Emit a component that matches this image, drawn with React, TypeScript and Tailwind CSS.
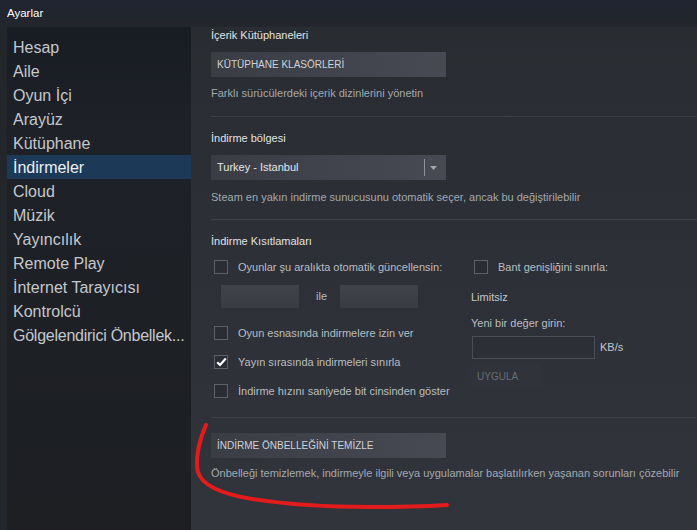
import React from 'react';

const sidebarItems = [
  'Hesap',
  'Aile',
  'Oyun İçi',
  'Arayüz',
  'Kütüphane',
  'İndirmeler',
  'Cloud',
  'Müzik',
  'Yayıncılık',
  'Remote Play',
  'İnternet Tarayıcısı',
  'Kontrolcü',
  'Gölgelendirici Önbellek...',
];

function Checkbox({ checked = false }: { checked?: boolean }) {
  return (
    <div className="w-[14px] h-[14px] shrink-0 border border-[#5d6067] bg-[#2a2d33] flex items-center justify-center">
      {checked && (
        <svg width="11" height="10" viewBox="0 0 11 10">
          <path d="M1.2 5.2 L4 8 L9.8 1.6" fill="none" stroke="#ffffff" strokeWidth="2.2" />
        </svg>
      )}
    </div>
  );
}

function CheckRow({ label, checked, className }: { label: string; checked?: boolean; className: string }) {
  return (
    <div className={`flex items-center h-[16px] ml-[3px] ${className}`}>
      <Checkbox checked={checked} />
      <span className="ml-[10px] text-[11px] text-[#b9bdc2] whitespace-nowrap">{label}</span>
    </div>
  );
}

export default function App() {
  return (
    <div className="relative w-[697px] h-[530px] overflow-hidden bg-[#23262b] font-['Liberation_Sans',Arial,sans-serif]">
      <div className="h-[27px] pl-[7px] flex items-center bg-gradient-to-b from-[#1e2531] to-[#23262b] text-[11.5px] text-white">
        Ayarlar
      </div>

      <div className="flex h-[503px]">
        <div className="w-[191px] shrink-0 pl-[7px] bg-[#23262b]">
          <div className="h-full pt-[8px] bg-gradient-to-b from-[#181c23] via-[#1e2127] via-20% to-[#1d1f23]">
            {sidebarItems.map((item) => (
              <div
                key={item}
                className={[
                  'h-[24px] pt-[2px] leading-[22px] pl-[6px] text-[16px] whitespace-nowrap overflow-hidden',
                  item.startsWith('Gölge') ? 'tracking-[-0.25px]' : '',
                  item === 'İndirmeler' ? 'bg-[#1c3a58] text-[#eef1f4]' : 'text-[#c4c8cd]',
                ].join(' ')}
              >
                {item}
              </div>
            ))}
          </div>
        </div>

        <div className="flex-1 pl-[20px] bg-gradient-to-b from-[#292c31] to-[#31343b]">
          <div className="mt-[1px] leading-[14px] text-[11px] text-[#e0e3e6]">İçerik Kütüphaneleri</div>
          <div className="mt-[10px] w-[235px] h-[25px] pl-[6px] flex items-center bg-gradient-to-r from-[#3a3d44] to-[#474a53] text-[10px] text-[#cdd2d8]">
            KÜTÜPHANE KLASÖRLERİ
          </div>
          <div className="mt-[9px] leading-[14px] text-[11px] text-[#a3a9b0]">Farklı sürücülerdeki içerik dizinlerini yönetin</div>
          <div className="mt-[16px] h-px bg-[#3d4046]" />

          <div className="mt-[14px] leading-[14px] text-[11px] text-[#e0e3e6]">İndirme bölgesi</div>
          <div className="mt-[10px] w-[235px] h-[25px] pl-[6px] flex items-center bg-gradient-to-r from-[#3a3d44] to-[#474a53] text-[11px] text-[#e4e7ea]">
            <span className="flex-1">Turkey - Istanbul</span>
            <div className="w-px h-[17px] bg-[#8e9298]" />
            <svg className="ml-[5px] mr-[9px]" width="7" height="4" viewBox="0 0 7 4">
              <path d="M0 0 H7 L3.5 4 Z" fill="#a3a7ad" />
            </svg>
          </div>
          <div className="mt-[10px] leading-[14px] text-[11px] text-[#a3a9b0]">
            Steam en yakın indirme sunucusunu otomatik seçer, ancak bu değiştirilebilir
          </div>
          <div className="mt-[15px] h-px bg-[#3d4046]" />

          <div className="mt-[14px] leading-[14px] text-[11px] text-[#e0e3e6]">İndirme Kısıtlamaları</div>
          <div className="flex">
            <div className="w-[260px]">
              <CheckRow className="mt-[11px]" label="Oyunlar şu aralıkta otomatik güncellensin:" />
              <div className="mt-[10px] ml-[10px] flex items-center">
                <div className="w-[78px] h-[23px] bg-gradient-to-b from-[#40434a] to-[#393c43]" />
                <span className="ml-[17px] mr-[13px] text-[11px] text-[#b9bdc2]">ile</span>
                <div className="w-[78px] h-[23px] bg-gradient-to-b from-[#40434a] to-[#393c43]" />
              </div>
              <CheckRow className="mt-[17px]" label="Oyun esnasında indirmelere izin ver" />
              <CheckRow className="mt-[13px]" label="Yayın sırasında indirmeleri sınırla" checked />
              <CheckRow className="mt-[13px]" label="İndirme hızını saniyede bit cinsinden göster" />
            </div>
            <div>
              <CheckRow className="mt-[11px]" label="Bant genişliğini sınırla:" />
              <div className="mt-[15px] leading-[14px] text-[11px] text-[#c4c7cb]">Limitsiz</div>
              <div className="mt-[12px] leading-[14px] text-[11px] text-[#b9bdc2]">Yeni bir değer girin:</div>
              <div className="mt-[6px] ml-[1px] flex items-center">
                <div className="w-[123px] h-[23px] border border-[#4b4f57] bg-[#2c2f36]" />
                <span className="ml-[5px] text-[11px] text-[#c4c7cb]">KB/s</span>
              </div>
              <div className="mt-[5px] w-[70px] h-[24px] pl-[6px] flex items-center bg-[#30333a] text-[10px] text-[#686c73]">
                UYGULA
              </div>
            </div>
          </div>
          <div className="mt-[18px] h-px bg-[#3d4046]" />

          <div className="mt-[15px] w-[235px] h-[25px] pl-[6px] flex items-center bg-gradient-to-r from-[#3a3d44] to-[#474a53] text-[10px] text-[#cdd2d8]">
            İNDİRME ÖNBELLEĞİNİ TEMİZLE
          </div>
          <div className="mt-[8px] leading-[14px] text-[11px] text-[#a3a9b0] whitespace-nowrap">
            Önbelleği temizlemek, indirmeyle ilgili veya uygulamalar başlatılırken yaşanan sorunları çözebilir
          </div>
        </div>
      </div>

      <svg className="absolute left-0 top-0 pointer-events-none" width="697" height="530" viewBox="0 0 697 530">
        <path
          d="M206 425 C199 440 195 460 198 472 C202 486 222 494 252 499 C290 505 330 507 370 507 C400 507 430 506 447 505"
          fill="none"
          stroke="#e31b1d"
          strokeWidth="4"
          strokeLinecap="round"
        />
      </svg>
    </div>
  );
}
